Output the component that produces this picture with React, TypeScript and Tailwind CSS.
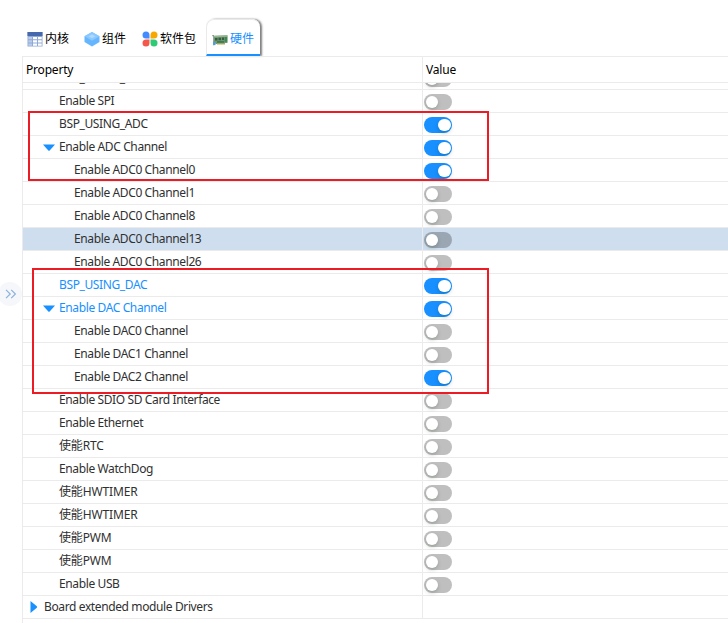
import type { ReactNode } from "react";

type Row = { label: string; level: number; on?: boolean; arrow?: "down" | "right"; active?: boolean; selected?: boolean; bare?: boolean; cjk?: boolean };

const rows: Row[] = [
  { label: "BSP_USING_SPI", level: 2 },
  { label: "Enable SPI", level: 2 },
  { label: "BSP_USING_ADC", level: 2, on: true },
  { label: "Enable ADC Channel", level: 2, on: true, arrow: "down" },
  { label: "Enable ADC0 Channel0", level: 3, on: true },
  { label: "Enable ADC0 Channel1", level: 3 },
  { label: "Enable ADC0 Channel8", level: 3 },
  { label: "Enable ADC0 Channel13", level: 3, selected: true },
  { label: "Enable ADC0 Channel26", level: 3 },
  { label: "BSP_USING_DAC", level: 2, on: true, active: true },
  { label: "Enable DAC Channel", level: 2, on: true, arrow: "down", active: true },
  { label: "Enable DAC0 Channel", level: 3 },
  { label: "Enable DAC1 Channel", level: 3 },
  { label: "Enable DAC2 Channel", level: 3, on: true },
  { label: "Enable SDIO SD Card Interface", level: 2 },
  { label: "Enable Ethernet", level: 2 },
  { label: "使能RTC", level: 2, cjk: true },
  { label: "Enable WatchDog", level: 2 },
  { label: "使能HWTIMER", level: 2, cjk: true },
  { label: "使能HWTIMER", level: 2, cjk: true },
  { label: "使能PWM", level: 2, cjk: true },
  { label: "使能PWM", level: 2, cjk: true },
  { label: "Enable USB", level: 2 },
  { label: "Board extended module Drivers", level: 1, arrow: "right", bare: true },
];

const indent: Record<number, string> = { 1: "pl-[6px]", 2: "pl-[21px]", 3: "pl-[36px]" };

function Toggle({ on, selected }: { on?: boolean; selected?: boolean }) {
  const track = on ? "bg-[#1890ff] justify-end" : selected ? "bg-[#9aa6b2] justify-start" : "bg-[#bfbfbf] justify-start";
  return (
    <span className={`flex h-4 w-7 items-center rounded-full px-[1.5px] ${track}`}>
      <span className="size-[12.5px] rounded-full bg-white shadow-[0_2px_4px_rgba(0,35,11,0.2)]" />
    </span>
  );
}

function PropertyRow({ row }: { row: Row }) {
  return (
    <div className={`flex h-[23px] shrink-0 border-b border-[#ebebeb] ${row.selected ? "bg-[#cfdeee]" : ""}`}>
      <div className={`flex w-[399px] shrink-0 items-start ${indent[row.level]}`}>
        <span className="flex h-[22px] w-[15px] shrink-0 items-center">
          {row.arrow === "down" && (
            <svg width="12" height="7" viewBox="0 0 12 7" className="-ml-px"><path d="M0 0.5H12L6.7 6.4Q6 7 5.3 6.4Z" fill="#1890ff" /></svg>
          )}
          {row.arrow === "right" && (
            <svg width="8" height="12" viewBox="0 0 8 12" className="ml-px"><path d="M0.5 0V12L6.8 6.7Q7.4 6 6.8 5.3Z" fill="#1890ff" /></svg>
          )}
        </span>
        <span className={`whitespace-nowrap leading-[22px] ${row.cjk ? "tracking-[-0.15px]" : "tracking-[-0.38px]"} ${row.active ? "text-[#1890ff]" : "text-[#303030]"}`}>{row.label}</span>
      </div>
      <div className="flex flex-1 items-start border-l border-[#ebebeb] pt-1 pl-px">
        {!row.bare && <Toggle on={row.on} selected={row.selected} />}
      </div>
    </div>
  );
}

function TableIcon() {
  return (
    <svg width="16" height="16" viewBox="0 0 16 16">
      <path d="M0.5 1H15.5V15.5H0.5Z" fill="#8fa8d5" />
      <path d="M0.5 1H15.5V5H0.5Z" fill="#4669ae" />
      <path d="M6 6H10V8.3H6ZM11 6H14.7V8.3H11ZM6 9.3H10V11.6H6ZM11 9.3H14.7V11.6H11ZM6 12.6H10V14.8H6ZM11 12.6H14.7V14.8H11Z" fill="#fff" />
      <path d="M1.3 6H5V8.3H1.3ZM1.3 9.3H5V11.6H1.3ZM1.3 12.6H5V14.8H1.3Z" fill="#bccbea" />
    </svg>
  );
}

function CubeIcon() {
  return (
    <svg width="16" height="16" viewBox="0 0 16 16">
      <path d="M0.5 5.3L8 1L15.5 5.3V11L8 15.5L0.5 11Z" fill="#66b5ff" />
      <path d="M0.5 5.3L8 1L15.5 5.3L8 9.7Z" fill="#8bc8ff" />
      <path d="M4.5 5.3L8 3.4L11.5 5.3L8 7.3Z" fill="#b0d9ff" />
    </svg>
  );
}

function PetalsIcon() {
  return (
    <svg width="16" height="16" viewBox="0 0 16 16">
      <path d="M4 0.5A3.5 3.5 0 0 1 7.5 4V7.5H4A3.5 3.5 0 0 1 4 0.5Z" fill="#438cff" />
      <path d="M12 0.5A3.5 3.5 0 0 1 12 7.5H8.5V4A3.5 3.5 0 0 1 12 0.5Z" fill="#f7a700" />
      <path d="M4 8.5H7.5V12A3.5 3.5 0 1 1 4 8.5Z" fill="#f4574b" />
      <path d="M8.5 8.5H12A3.5 3.5 0 1 1 8.5 12Z" fill="#2fca76" />
    </svg>
  );
}

function BoardIcon() {
  return (
    <svg width="16" height="16" viewBox="0 0 16 16">
      <path d="M0.3 3H2V13H1.2V4.2H0.3Z" fill="#8b9590" />
      <path d="M1.8 3.8L15.5 3.3V11H13V12H4V11.5H1.8Z" fill="#6f9876" />
      <path d="M2 4L15.5 3.5V4.7L2 5.3Z" fill="#9bb78f" />
      <path d="M3 6H5.5V8.5H3ZM6.5 5.8H9V8.3H6.5ZM10 5.6H12V8H10Z" fill="#365b3e" />
      <path d="M12.7 5H15.2V9.8H12.7Z" fill="#3c8754" />
      <path d="M5 9H12V10.8H5Z" fill="#3b7d50" />
      <path d="M5 11.5H13V12.6H5Z" fill="#cab866" />
      <path d="M1 9.5L3.6 10.5V12.8L1.4 13.5Z" fill="#4aa0d6" />
    </svg>
  );
}

function Tab({ icon, label, className }: { icon: ReactNode; label: string; className: string }) {
  return (
    <div className={`flex h-[37px] shrink-0 items-center gap-[2px] whitespace-nowrap ${className}`}>
      <span className="mt-[3px]">{icon}</span>
      <span className="mt-[2px] leading-5">{label}</span>
    </div>
  );
}

export default function App() {
  return (
    <div className="relative flex h-[623px] w-[728px] overflow-hidden bg-white font-['Noto_Sans','Noto_Sans_CJK_SC',sans-serif] text-[12px] text-black">
      <div className="flex w-[22px] shrink-0 items-center overflow-hidden pb-px">
        <div className="mt-[-35px] -ml-[2px] flex size-6 shrink-0 items-center justify-center rounded-full bg-[#f5f7fa]">
          <svg width="12" height="10" viewBox="0 0 12 10" fill="none" stroke="#8eb1dc" strokeWidth="1.2" className="ml-px"><path d="M1 .8L5.2 5L1 9.2M6.2 .8L10.4 5L6.2 9.2" /></svg>
        </div>
      </div>
      <main className="flex min-w-0 flex-1 flex-col">
        <nav className="flex h-[56px] shrink-0 pt-[19px] pl-[5px]">
          <Tab icon={<TableIcon />} label="内核" className="w-[57px]" />
          <Tab icon={<CubeIcon />} label="组件" className="w-[58px]" />
          <Tab icon={<PetalsIcon />} label="软件包" className="w-[64px]" />
          <Tab icon={<BoardIcon />} label="硬件" className="w-[54px] rounded-t-lg border-t border-l border-b-2 border-t-[#eaeaea] border-l-[#eaeaea] border-b-[#1890ff] pt-[2px] pl-[5px] text-[#1890ff] shadow-[2px_0_2px_rgba(0,0,0,0.5)]" />
        </nav>
        <section className="flex min-h-0 flex-1 flex-col border-t border-l border-[#ebebeb]">
          <header className="flex h-[26px] shrink-0 border-b border-[#ebebeb] leading-[26px] tracking-[-0.2px]">
            <div className="w-[399px] pl-[3px]">Property</div>
            <div className="flex-1 border-l border-[#ebebeb] pl-[3px]">Value</div>
          </header>
          <div className="flex min-h-0 flex-1 flex-col overflow-hidden">
            <div className="-mt-4 flex flex-col">
              {rows.map((row, index) => <PropertyRow key={index} row={row} />)}
            </div>
          </div>
        </section>
      </main>
      <div className="pointer-events-none absolute top-[111px] left-[28px] h-[70px] w-[461px] border-2 border-[#ed1c24]" />
      <div className="pointer-events-none absolute top-[268px] left-[32px] h-[126px] w-[457px] border-2 border-[#ed1c24]" />
    </div>
  );
}
